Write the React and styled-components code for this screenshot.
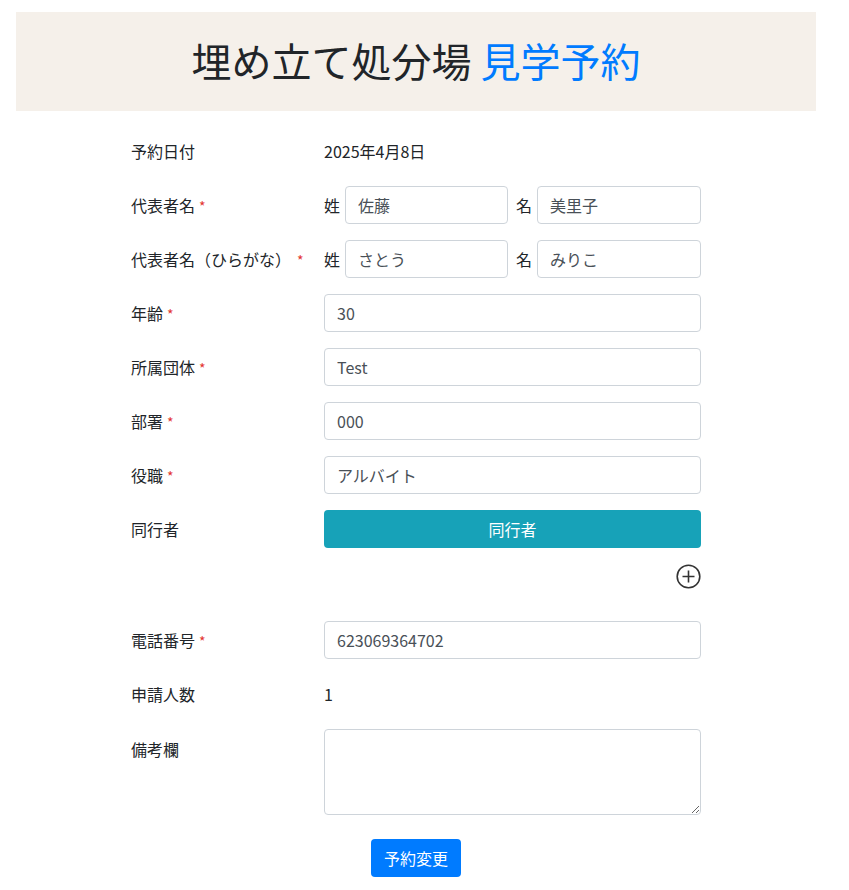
import styled, { createGlobalStyle } from "styled-components";

const GlobalStyle = createGlobalStyle`
  body {
    margin: 0;
    background: #fff;
    font-family: "Noto Sans CJK JP", "Noto Sans", sans-serif;
    color: #212529;
    font-size: 16px;
  }
`;

const Page = styled.div`
  padding: 12px 0 20px 16px;
`;

const Header = styled.header`
  width: 800px;
  height: 99px;
  background: #f5f0ea;
  display: flex;
  align-items: center;
  justify-content: center;
`;

const Title = styled.h1`
  margin: 0 0 4px;
  font-size: 40px;
  font-weight: 400;
  color: #212529;
`;

const Accent = styled.span`
  color: #007bff;
`;

const Form = styled.form`
  width: 570px;
  margin: 21px 0 0 115px;
`;

const Row = styled.div`
  display: grid;
  grid-template-columns: 193px 377px;
  align-items: ${(p) => (p.$top ? "start" : "center")};
  min-height: 38px;
  margin-bottom: 16px;
`;

const Label = styled.label`
  font-size: 16px;
  line-height: 24px;
  padding-top: ${(p) => (p.$top ? "8px" : "0")};
`;

const Req = styled.span`
  color: #e3342f;
  font-size: 14px;
  margin-left: ${(p) => p.$gap || "4px"};
`;

const Value = styled.div`
  font-size: 16px;
`;

const Input = styled.input`
  box-sizing: border-box;
  width: 100%;
  height: 38px;
  padding: 6px 12px;
  border: 1px solid #ced4da;
  border-radius: 4px;
  font-family: inherit;
  font-size: 16px;
  color: #495057;
  background: #fff;
`;

const NameGroup = styled.div`
  display: grid;
  grid-template-columns: 21px 163px 29px 164px;
  align-items: center;
`;

const Sub = styled.span`
  font-size: 16px;
  padding-left: ${(p) => (p.$second ? "8px" : "0")};
`;

const Button = styled.button`
  border: none;
  border-radius: 4px;
  height: 38px;
  font-family: inherit;
  font-size: 16px;
  color: #fff;
  background: ${(p) => p.$bg};
  width: ${(p) => p.$w || "100%"};
  padding: 0 12px;
`;

const PlusRow = styled.div`
  display: flex;
  justify-content: flex-end;
  height: 25px;
  margin-bottom: 32px;
`;

const TextArea = styled.textarea`
  box-sizing: border-box;
  width: 100%;
  height: 86px;
  border: 1px solid #ced4da;
  border-radius: 4px;
  font-family: inherit;
  font-size: 16px;
  padding: 6px 12px;
`;

const Submit = styled.div`
  display: flex;
  justify-content: center;
  margin-top: 24px;
`;

export default function App() {
  return (
    <Page>
      <GlobalStyle />
      <Header>
        <Title>
          埋め立て処分場 <Accent>見学予約</Accent>
        </Title>
      </Header>
      <Form>
        <Row>
          <Label>予約日付</Label>
          <Value>2025年4月8日</Value>
        </Row>
        <Row>
          <Label>代表者名<Req>*</Req></Label>
          <NameGroup>
            <Sub>姓</Sub>
            <Input defaultValue="佐藤" />
            <Sub $second>名</Sub>
            <Input defaultValue="美里子" />
          </NameGroup>
        </Row>
        <Row>
          <Label>代表者名（ひらがな）<Req $gap="6px">*</Req></Label>
          <NameGroup>
            <Sub>姓</Sub>
            <Input defaultValue="さとう" />
            <Sub $second>名</Sub>
            <Input defaultValue="みりこ" />
          </NameGroup>
        </Row>
        <Row>
          <Label>年齢<Req>*</Req></Label>
          <Input defaultValue="30" />
        </Row>
        <Row>
          <Label>所属団体<Req>*</Req></Label>
          <Input defaultValue="Test" />
        </Row>
        <Row>
          <Label>部署<Req>*</Req></Label>
          <Input defaultValue="000" />
        </Row>
        <Row>
          <Label>役職<Req>*</Req></Label>
          <Input defaultValue="アルバイト" />
        </Row>
        <Row>
          <Label>同行者</Label>
          <Button type="button" $bg="#17a2b8">同行者</Button>
        </Row>
        <PlusRow>
          <svg width="25" height="25" viewBox="0 0 25 25" fill="none" stroke="#333" strokeWidth="1.6">
            <circle cx="12.5" cy="12.5" r="11.3" />
            <path d="M12.5 6.5v12M6.5 12.5h12" />
          </svg>
        </PlusRow>
        <Row>
          <Label>電話番号<Req>*</Req></Label>
          <Input defaultValue="623069364702" />
        </Row>
        <Row>
          <Label>申請人数</Label>
          <Value>1</Value>
        </Row>
        <Row $top>
          <Label $top>備考欄</Label>
          <TextArea />
        </Row>
        <Submit>
          <Button type="button" $bg="#007bff" $w="90px">予約変更</Button>
        </Submit>
      </Form>
    </Page>
  );
}
